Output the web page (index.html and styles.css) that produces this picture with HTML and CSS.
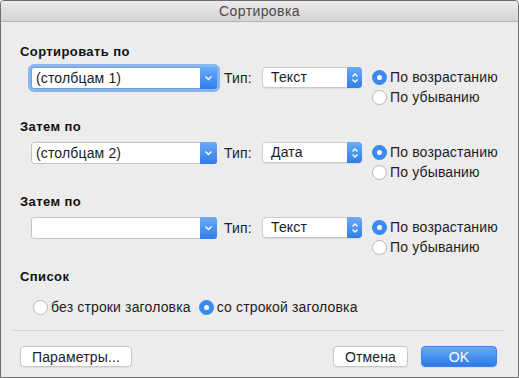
FILE: index.html
```html
<!DOCTYPE html>
<html>
<head>
    <title>Сортировка</title>
    <meta charset="UTF-8">
    <link rel="stylesheet" href="styles.css">
</head>
<body>
    <div class="window">
        <div class="titlebar">Сортировка</div>

        <div class="content">
            <div class="group">
                <h2>Сортировать по</h2>
                <div class="sort-row">
                    <div class="combo focused">
                        <span class="combo-text">(столбцам 1)</span>
                        <span class="combo-btn"><svg width="9" height="6" viewBox="0 0 9 6"><path d="M1.5 1.5 L4.5 4.5 L7.5 1.5" fill="none" stroke="#fff" stroke-width="1.4"/></svg></span>
                    </div>
                    <span class="type-label">Тип:</span>
                    <div class="popup">
                        <span class="popup-text">Текст</span>
                        <span class="popup-btn"><svg width="8" height="12" viewBox="0 0 8 12"><path d="M1.5 4.5 L4 2 L6.5 4.5 M1.5 7.5 L4 10 L6.5 7.5" fill="none" stroke="#fff" stroke-width="1.3"/></svg></span>
                    </div>
                    <div class="radios">
                        <label class="radio"><span class="dot checked"></span>По возрастанию</label>
                        <label class="radio"><span class="dot"></span>По убыванию</label>
                    </div>
                </div>
            </div>

            <div class="group">
                <h2>Затем по</h2>
                <div class="sort-row">
                    <div class="combo">
                        <span class="combo-text">(столбцам 2)</span>
                        <span class="combo-btn"><svg width="9" height="6" viewBox="0 0 9 6"><path d="M1.5 1.5 L4.5 4.5 L7.5 1.5" fill="none" stroke="#fff" stroke-width="1.4"/></svg></span>
                    </div>
                    <span class="type-label">Тип:</span>
                    <div class="popup">
                        <span class="popup-text">Дата</span>
                        <span class="popup-btn"><svg width="8" height="12" viewBox="0 0 8 12"><path d="M1.5 4.5 L4 2 L6.5 4.5 M1.5 7.5 L4 10 L6.5 7.5" fill="none" stroke="#fff" stroke-width="1.3"/></svg></span>
                    </div>
                    <div class="radios">
                        <label class="radio"><span class="dot checked"></span>По возрастанию</label>
                        <label class="radio"><span class="dot"></span>По убыванию</label>
                    </div>
                </div>
            </div>

            <div class="group">
                <h2>Затем по</h2>
                <div class="sort-row">
                    <div class="combo">
                        <span class="combo-text"></span>
                        <span class="combo-btn"><svg width="9" height="6" viewBox="0 0 9 6"><path d="M1.5 1.5 L4.5 4.5 L7.5 1.5" fill="none" stroke="#fff" stroke-width="1.4"/></svg></span>
                    </div>
                    <span class="type-label">Тип:</span>
                    <div class="popup">
                        <span class="popup-text">Текст</span>
                        <span class="popup-btn"><svg width="8" height="12" viewBox="0 0 8 12"><path d="M1.5 4.5 L4 2 L6.5 4.5 M1.5 7.5 L4 10 L6.5 7.5" fill="none" stroke="#fff" stroke-width="1.3"/></svg></span>
                    </div>
                    <div class="radios">
                        <label class="radio"><span class="dot checked"></span>По возрастанию</label>
                        <label class="radio"><span class="dot"></span>По убыванию</label>
                    </div>
                </div>
            </div>

            <div class="group list-group">
                <h2>Список</h2>
                <div class="list-row">
                    <label class="radio"><span class="dot"></span>без строки заголовка</label>
                    <label class="radio"><span class="dot checked"></span>со строкой заголовка</label>
                </div>
            </div>
        </div>

        <div class="separator"></div>

        <div class="buttons">
            <button class="btn btn-options">Параметры...</button>
            <div class="btn-group">
                <button class="btn btn-cancel">Отмена</button>
                <button class="btn btn-ok">OK</button>
            </div>
        </div>
    </div>
</body>
</html>
```

FILE: styles.css
```css
body {
    margin: 0;
    font-family: "Liberation Sans", Arial, sans-serif;
    font-size: 14px;
    letter-spacing: 0.15px;
    color: #1c1c1c;
    background: #ececec;
}
.window {
    width: 519px;
    height: 378px;
    box-sizing: border-box;
    border: 1px solid #6e6e6e;
    border-radius: 4px 4px 0 0;
    background: #ececec;
    overflow: hidden;
}
.titlebar {
    height: 20px;
    line-height: 20px;
    text-align: center;
    color: #4a4a4a;
    letter-spacing: 0.4px;
    background: linear-gradient(#ebe9eb, #d4d2d4);
    border-bottom: 1px solid #b4b4b4;
}
.content {
    padding: 22px 0 0 19px;
}
h2 {
    margin: 0 0 7px;
    font-size: 13px;
    line-height: 16px;
    font-weight: bold;
    letter-spacing: 0.4px;
    color: #111;
}
.group {
    margin-bottom: 12px;
}
.sort-row {
    display: flex;
    align-items: flex-start;
    margin-left: 11px;
    height: 40px;
}
.combo {
    display: flex;
    width: 186px;
    height: 22px;
    box-sizing: border-box;
    border: 1px solid #c4c4c4;
    border-radius: 3px;
    background: #fff;
}
.combo.focused {
    box-shadow: 0 0 0 3px #88b6ee;
    border-color: #6b9fe3;
}
.combo-text {
    flex: 1;
    padding-left: 4px;
    line-height: 20px;
}
.combo-btn, .popup-btn {
    width: 17px;
    margin: -1px -1px -1px 0;
    display: flex;
    align-items: center;
    justify-content: center;
    border-radius: 0 3px 3px 0;
    background: linear-gradient(#6aacf8, #2f7de9);
}
.type-label {
    width: 38px;
    margin-left: 7px;
    line-height: 22px;
}
.popup {
    display: flex;
    width: 100px;
    height: 21px;
    box-sizing: border-box;
    border: 1px solid #cbcbcb;
    border-radius: 4px;
    background: #fff;
    box-shadow: 0 1px 1px rgba(0, 0, 0, 0.08);
}
.popup-text {
    flex: 1;
    padding-left: 8px;
    line-height: 19px;
}
.popup-btn {
    width: 15px;
    border-radius: 0 4px 4px 0;
}
.radios {
    margin-left: 10px;
}
.radio {
    display: flex;
    align-items: center;
    height: 20px;
    white-space: nowrap;
}
.dot {
    width: 15px;
    height: 15px;
    box-sizing: border-box;
    border: 1px solid #b8b8b8;
    border-radius: 50%;
    background: #fff;
    margin-right: 3px;
}
.dot.checked {
    border: 5px solid #3a8bf0;
    background: #fff;
}
.list-group h2 {
    margin-bottom: 12px;
}
.list-row {
    display: flex;
    gap: 8px;
    margin-left: 13px;
    height: 20px;
}
.separator {
    height: 1px;
    background: #d5d5d5;
    margin: 13px 13px 0 11px;
}
.buttons {
    display: flex;
    justify-content: space-between;
    padding: 15px 21px 0 19px;
}
.btn-group {
    display: flex;
    gap: 13px;
}
.btn {
    height: 21px;
    box-sizing: border-box;
    padding: 0;
    border: 1px solid #c6c6c6;
    border-radius: 4px;
    background: #fff;
    font-family: "Liberation Sans", Arial, sans-serif;
    font-size: 14px;
    letter-spacing: 0.15px;
    color: #1c1c1c;
    box-shadow: 0 1px 1px rgba(0, 0, 0, 0.06);
}
.btn-options {
    width: 112px;
}
.btn-cancel {
    width: 75px;
}
.btn-ok {
    width: 76px;
    color: #fff;
    border-color: #3b86ea;
    background: linear-gradient(#66abf8, #2c7ae8);
}
```
